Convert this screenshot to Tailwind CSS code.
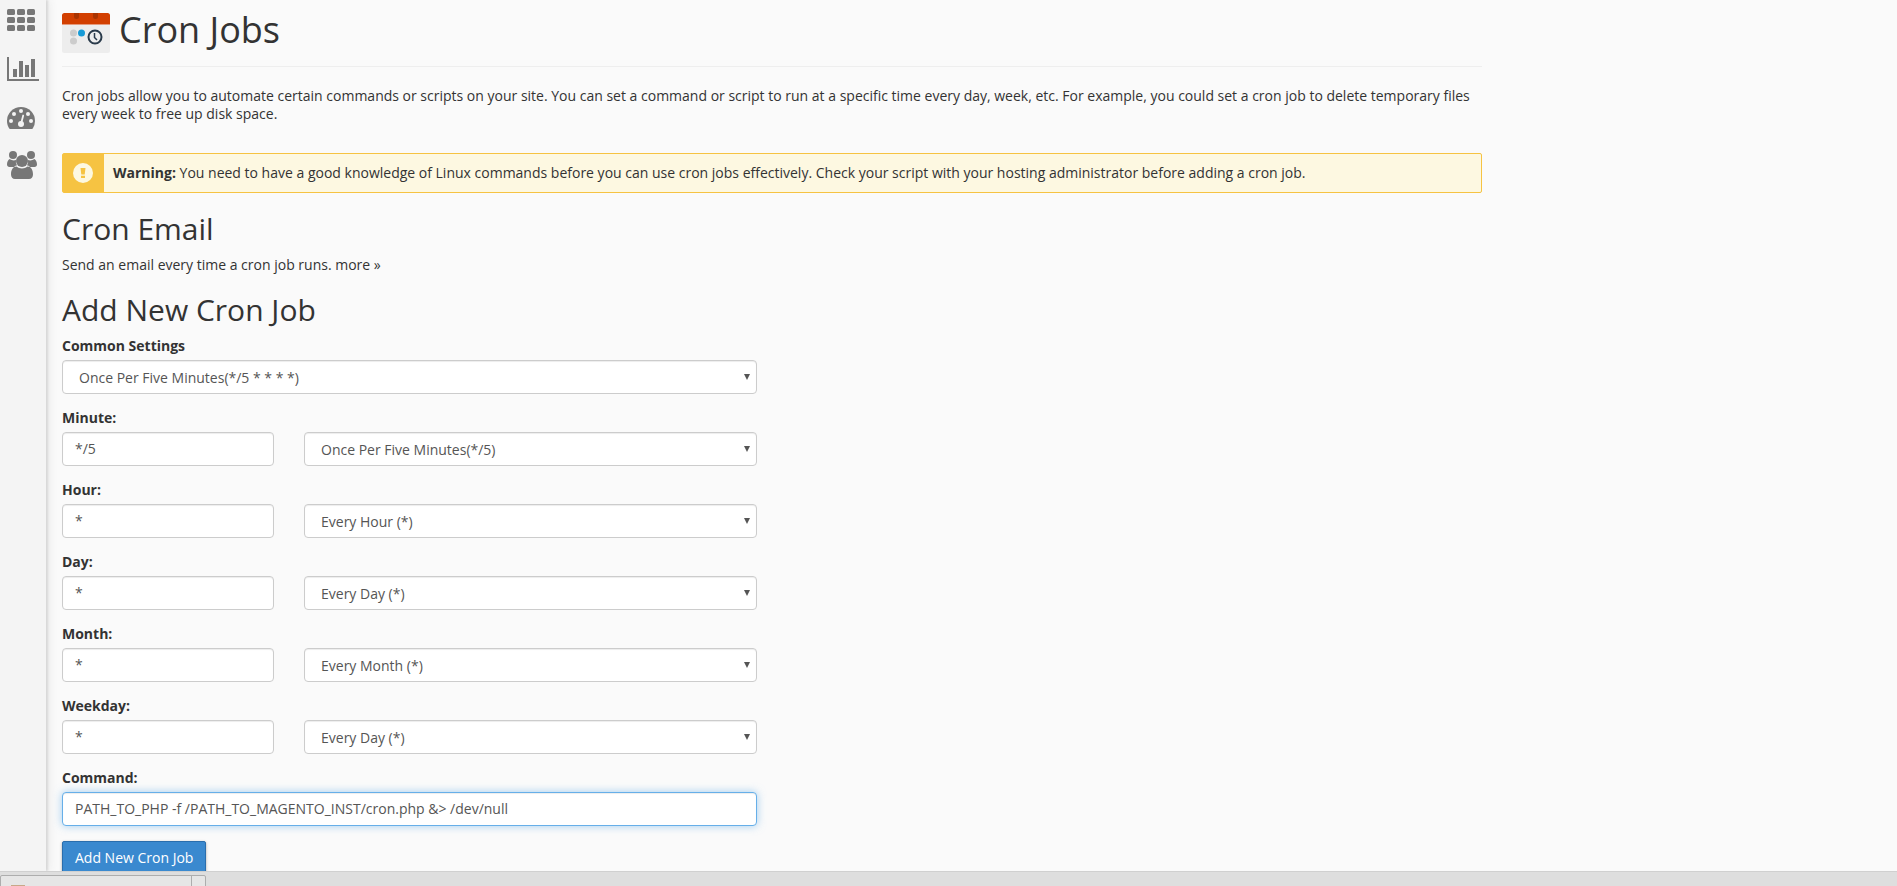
<!DOCTYPE html>
<html lang="en">
	<head>
		<meta charset="UTF-8" />
		<meta name="viewport" content="width=device-width, initial-scale=1.0" />
		<title>Cron Jobs</title>
		<script src="https://cdn.jsdelivr.net/npm/@tailwindcss/browser@4"></script>
	</head>
	<body
		class="h-screen flex flex-col overflow-hidden bg-[#fafafa] text-[#333333] text-sm leading-[18px] font-['Open_Sans',sans-serif]"
	>
		<div class="flex flex-1 min-h-0">
			<!-- Sidebar -->
			<nav
				class="w-[46px] shrink-0 pl-[7px] pt-2 flex flex-col bg-[#f4f4f4] text-[#777777] shadow-[2px_0_2px_#d8d8d8,4px_0_8px_#ececec]"
			>
				<a href="#" aria-label="Home" class="h-12">
					<svg viewBox="0 0 28 24" class="w-7 h-6" fill="currentColor">
						<rect x="0" y="1" width="8" height="6" rx="1.5" />
						<rect x="10" y="1" width="8" height="6" rx="1.5" />
						<rect x="20" y="1" width="8" height="6" rx="1.5" />
						<rect x="0" y="9" width="8" height="6" rx="1.5" />
						<rect x="10" y="9" width="8" height="6" rx="1.5" />
						<rect x="20" y="9" width="8" height="6" rx="1.5" />
						<rect x="0" y="17" width="8" height="6" rx="1.5" />
						<rect x="10" y="17" width="8" height="6" rx="1.5" />
						<rect x="20" y="17" width="8" height="6" rx="1.5" />
					</svg>
				</a>
				<a href="#" aria-label="Statistics" class="h-[50px]">
					<svg viewBox="0 0 32 26" class="w-8 h-[26px]" fill="currentColor">
						<path d="M0 1h2v22h30v2H0z" />
						<rect x="6" y="13" width="4" height="8" />
						<rect x="12" y="5" width="4" height="16" />
						<rect x="18" y="9" width="4" height="12" />
						<rect x="24" y="3" width="4" height="18" />
					</svg>
				</a>
				<a href="#" aria-label="Dashboard" class="h-[44px]">
					<svg viewBox="0 0 28 24" class="w-7 h-6">
						<path
							fill="currentColor"
							d="M14 1A14 14 0 0 0 0 15c0 2.7.8 5.3 2.2 7.5.2.3.5.5.9.5h21.8c.4 0 .7-.2.9-.5A14 14 0 0 0 28 15 14 14 0 0 0 14 1z"
						/>
						<g fill="#f4f4f4">
							<circle cx="4" cy="15" r="2" />
							<circle cx="7" cy="8" r="2" />
							<circle cx="14" cy="5" r="2" />
							<circle cx="21" cy="8" r="2" />
							<circle cx="24" cy="15" r="2" />
							<circle cx="14" cy="18" r="3" />
						</g>
						<path d="M14 18l2.2-8.5" stroke="#f4f4f4" stroke-width="1.8" stroke-linecap="round" />
					</svg>
				</a>
				<a href="#" aria-label="Users">
					<svg viewBox="0 0 30 30" class="w-[30px] h-[30px]" fill="currentColor">
						<circle cx="6" cy="5" r="4" />
						<circle cx="24" cy="5" r="4" />
						<path d="M2.5 9C1 10 0 12 0 14.500 0 16 1 17 2.500 17H7c1-1 2-1.500 3-1.700A7 7 0 0 1 9 10c-2 .8-4.500.4-6.500-1z" />
						<path d="M27.500 9c1.500 1 2.500 3 2.500 5.500 0 1.500-1 2.500-2.500 2.500H23c-1-1-2-1.500-3-1.700A7 7 0 0 0 21 10c2 .8 4.500.4 6.500-1z" />
						<circle cx="15" cy="11" r="6" />
						<path d="M9.500 16.500C6 16.500 4 20 4 24.500 4 27 5.500 29 8 29h14c2.500 0 4-2 4-4.500 0-4.500-2-8-5.500-8-1.500 1.200-3.300 2-5.500 2s-4-.8-5.500-2z" />
					</svg>
				</a>
			</nav>

			<!-- Content -->
			<main class="flex-1 min-w-0 px-4">
				<div class="max-w-[1420px]">
					<div class="flex items-center gap-[9px] h-[67px] border-b border-[#eeeeee]">
						<svg viewBox="0 0 48 40" class="w-12 h-10 shrink-0">
							<rect width="48" height="40" rx="2.5" fill="#ededed" />
							<path d="M0 11V2.500A2.500 2.500 0 0 1 2.500 0h43A2.500 2.500 0 0 1 48 2.500V11z" fill="#d23f00" />
							<path d="M0 11h48v1H0z" fill="#e59a7c" />
							<path d="M12 0h5v3.500a2.500 2.500 0 0 1-5 0zM31 0h5v3.500a2.500 2.500 0 0 1-5 0z" fill="#a93300" />
							<circle cx="11.5" cy="20" r="3.5" fill="#cccccc" />
							<circle cx="11.5" cy="28" r="3.5" fill="#cccccc" />
							<circle cx="19.5" cy="20" r="3.5" fill="#179bd7" />
							<circle cx="33" cy="24" r="6.5" fill="none" stroke="#293a4a" stroke-width="2" />
							<path d="M32.5 20v4.500l2.500 2.500" fill="none" stroke="#293a4a" stroke-width="1.5" />
						</svg>
						<h1 class="text-4xl leading-10 pb-1.5">Cron Jobs</h1>
					</div>

					<p class="mt-5">
						Cron jobs allow you to automate certain commands or scripts on your site. You can set a command or script to run at a specific time every day, week, etc. For example, you could set a cron job to delete temporary files every week to free up disk space.
					</p>

					<div class="mt-[30px] flex rounded-xs border border-[#f6c342] bg-[#fdf8e1]">
						<div class="w-[41px] shrink-0 flex items-center pl-[10px] bg-[#f6c342]">
							<svg viewBox="0 0 20 20" class="w-5 h-5">
								<circle cx="10" cy="10" r="10" fill="#fdf8e1" />
								<path d="M7.5 5h5l-.8 6.500H8.300zM8 12.800h4V15H8z" fill="#f6c342" />
							</svg>
						</div>
						<p class="px-[9px] py-[10px]">
							<strong>Warning:</strong> You need to have a good knowledge of Linux commands before you can use cron jobs effectively. Check your script with your hosting administrator before adding a cron job.
						</p>
					</div>

					<h2 class="mt-[19px] text-3xl leading-[33px]">Cron Email</h2>
					<p class="mt-[11px]">Send an email every time a cron job runs. <a href="#">more »</a></p>

					<h2 class="mt-[19px] text-3xl leading-[33px]">Add New Cron Job</h2>

					<form class="mt-[11px] max-w-[695px] flex flex-col gap-[15px]">
						<div>
							<label for="common" class="block mb-[5px] font-bold">Common Settings</label>
							<div class="relative">
								<select id="common" class="block w-full h-[34px] appearance-none rounded border border-[#cccccc] bg-white px-4 pt-[2px] text-[#555555] shadow-[inset_0_1px_1px_#00000013]">
									<option>Once Per Five Minutes(*/5 * * * *)</option>
								</select>
								<svg viewBox="0 0 6 6" class="absolute right-[7px] top-[14px] w-[6px] h-[6px] pointer-events-none" fill="#555555"><path d="M0 0h6L3 6z" /></svg>
							</div>
						</div>

						<div>
							<label for="minute" class="block mb-[5px] font-bold">Minute:</label>
							<div class="grid grid-cols-[212px_1fr] gap-[30px]">
								<input id="minute" type="text" value="*/5" class="h-[34px] min-w-0 rounded border border-[#cccccc] bg-white px-3 pb-[2px] text-[#555555] shadow-[inset_0_1px_1px_#00000013]" />
								<div class="relative">
									<select aria-label="Minute presets" class="block w-full h-[34px] appearance-none rounded border border-[#cccccc] bg-white px-4 pt-[2px] text-[#555555] shadow-[inset_0_1px_1px_#00000013]">
										<option>Once Per Five Minutes(*/5)</option>
									</select>
									<svg viewBox="0 0 6 6" class="absolute right-[7px] top-[14px] w-[6px] h-[6px] pointer-events-none" fill="#555555"><path d="M0 0h6L3 6z" /></svg>
								</div>
							</div>
						</div>

						<div>
							<label for="hour" class="block mb-[5px] font-bold">Hour:</label>
							<div class="grid grid-cols-[212px_1fr] gap-[30px]">
								<input id="hour" type="text" value="*" class="h-[34px] min-w-0 rounded border border-[#cccccc] bg-white px-3 pb-[2px] text-[#555555] shadow-[inset_0_1px_1px_#00000013]" />
								<div class="relative">
									<select aria-label="Hour presets" class="block w-full h-[34px] appearance-none rounded border border-[#cccccc] bg-white px-4 pt-[2px] text-[#555555] shadow-[inset_0_1px_1px_#00000013]">
										<option>Every Hour (*)</option>
									</select>
									<svg viewBox="0 0 6 6" class="absolute right-[7px] top-[14px] w-[6px] h-[6px] pointer-events-none" fill="#555555"><path d="M0 0h6L3 6z" /></svg>
								</div>
							</div>
						</div>

						<div>
							<label for="day" class="block mb-[5px] font-bold">Day:</label>
							<div class="grid grid-cols-[212px_1fr] gap-[30px]">
								<input id="day" type="text" value="*" class="h-[34px] min-w-0 rounded border border-[#cccccc] bg-white px-3 pb-[2px] text-[#555555] shadow-[inset_0_1px_1px_#00000013]" />
								<div class="relative">
									<select aria-label="Day presets" class="block w-full h-[34px] appearance-none rounded border border-[#cccccc] bg-white px-4 pt-[2px] text-[#555555] shadow-[inset_0_1px_1px_#00000013]">
										<option>Every Day (*)</option>
									</select>
									<svg viewBox="0 0 6 6" class="absolute right-[7px] top-[14px] w-[6px] h-[6px] pointer-events-none" fill="#555555"><path d="M0 0h6L3 6z" /></svg>
								</div>
							</div>
						</div>

						<div>
							<label for="month" class="block mb-[5px] font-bold">Month:</label>
							<div class="grid grid-cols-[212px_1fr] gap-[30px]">
								<input id="month" type="text" value="*" class="h-[34px] min-w-0 rounded border border-[#cccccc] bg-white px-3 pb-[2px] text-[#555555] shadow-[inset_0_1px_1px_#00000013]" />
								<div class="relative">
									<select aria-label="Month presets" class="block w-full h-[34px] appearance-none rounded border border-[#cccccc] bg-white px-4 pt-[2px] text-[#555555] shadow-[inset_0_1px_1px_#00000013]">
										<option>Every Month (*)</option>
									</select>
									<svg viewBox="0 0 6 6" class="absolute right-[7px] top-[14px] w-[6px] h-[6px] pointer-events-none" fill="#555555"><path d="M0 0h6L3 6z" /></svg>
								</div>
							</div>
						</div>

						<div>
							<label for="weekday" class="block mb-[5px] font-bold">Weekday:</label>
							<div class="grid grid-cols-[212px_1fr] gap-[30px]">
								<input id="weekday" type="text" value="*" class="h-[34px] min-w-0 rounded border border-[#cccccc] bg-white px-3 pb-[2px] text-[#555555] shadow-[inset_0_1px_1px_#00000013]" />
								<div class="relative">
									<select aria-label="Weekday presets" class="block w-full h-[34px] appearance-none rounded border border-[#cccccc] bg-white px-4 pt-[2px] text-[#555555] shadow-[inset_0_1px_1px_#00000013]">
										<option>Every Day (*)</option>
									</select>
									<svg viewBox="0 0 6 6" class="absolute right-[7px] top-[14px] w-[6px] h-[6px] pointer-events-none" fill="#555555"><path d="M0 0h6L3 6z" /></svg>
								</div>
							</div>
						</div>

						<div>
							<label for="command" class="block mb-[5px] font-bold">Command:</label>
							<input
								id="command"
								type="text"
								value="PATH_TO_PHP -f /PATH_TO_MAGENTO_INST/cron.php &amp;&gt; /dev/null"
								class="block w-full h-[34px] rounded border border-[#66afe9] bg-white px-3 pb-[2px] text-[#555555] outline-none shadow-[inset_0_1px_1px_#00000013,0_0_8px_#66afe999]"
							/>
						</div>

						<button
							type="button"
							class="self-start h-[34px] px-3 rounded-xs border border-[#2a6ead] bg-[#3a89cf] text-white shadow-[0_1px_3px_#00000055]"
						>
							Add New Cron Job
						</button>
					</form>
				</div>
			</main>
		</div>

		<!-- Downloads bar -->
		<footer class="relative h-[15px] shrink-0 overflow-hidden border-t border-[#d0d0d0] bg-[#dedede] pt-[3px]">
			<div class="flex w-[206px] h-8 rounded-xs border border-[#adadad] bg-[#e6e6e6]">
				<div class="flex-1 border-r border-[#adadad] pl-[10px] pt-[9px]">
					<div class="w-[14px] h-4 bg-[#c8a888]"></div>
				</div>
				<div class="w-[13px]"></div>
			</div>
		</footer>
	</body>
</html>
